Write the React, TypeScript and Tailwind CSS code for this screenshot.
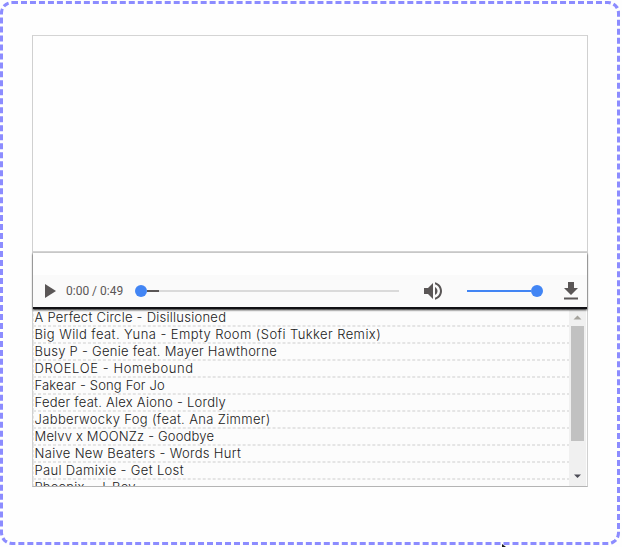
const tracks = [
  { title: 'A Perfect Circle - Disillusioned', spacing: 'tracking-[0.25px]' },
  { title: 'Big Wild feat. Yuna - Empty Room (Sofi Tukker Remix)', spacing: 'tracking-[0.42px]' },
  { title: 'Busy P - Genie feat. Mayer Hawthorne', spacing: 'tracking-[0.28px]' },
  { title: 'DROELOE - Homebound', spacing: 'tracking-[0.6px]' },
  { title: 'Fakear - Song For Jo', spacing: 'tracking-[0.17px]' },
  { title: 'Feder feat. Alex Aiono - Lordly', spacing: 'tracking-[0.25px]' },
  { title: 'Jabberwocky Fog (feat. Ana Zimmer)', spacing: 'tracking-[0.35px]' },
  { title: 'Melvv x MOONZz - Goodbye', spacing: 'tracking-[0.17px]' },
  { title: 'Naive New Beaters - Words Hurt', spacing: 'tracking-[0.32px]' },
  { title: 'Paul Damixie - Get Lost', spacing: 'tracking-[0.34px]' },
  { title: 'Phoenix - J-Boy', spacing: 'tracking-[0.2px]' },
];

function Player() {
  return (
    <div className="relative z-10 flex h-[56px] flex-col border-b-2 border-[#101014] bg-[#fefefe] shadow-[0_1px_2px_#222]">
      <div className="h-[22px] shrink-0" />
      <div className="flex h-8 items-center bg-[#fafafa] pl-3">
        <svg className="h-[14px] w-[11px] shrink-0" viewBox="0 0 11 14" fill="#5a5656"><path d="M0 0L11 7L0 14Z" /></svg>
        <span className="ml-[10px] w-[69px] shrink-0 font-[Roboto,sans-serif] text-[12px] leading-4 text-[#5a5656]">0:00 / 0:49</span>
        <div className="flex w-[264px] shrink-0 items-center">
          <div className="size-3 shrink-0 rounded-full bg-[#4285f4]" />
          <div className="h-[2px] w-3 bg-[#5a5656]" />
          <div className="h-[2px] flex-1 bg-[#dadada]" />
        </div>
        <svg className="ml-[25px] h-[18px] w-[18px] shrink-0" viewBox="3 3 18 18" fill="#5a5656">
          <path d="M3 9v6h4l5 5V4L7 9H3zm13.5 3c0-1.77-1.02-3.29-2.5-4.03v8.05c1.48-.73 2.5-2.25 2.5-4.02zM14 3.23v2.06c2.89.86 5 3.54 5 6.71s-2.11 5.85-5 6.71v2.06c4.01-.91 7-4.49 7-8.77s-2.99-7.86-7-8.77z" />
        </svg>
        <div className="ml-[25px] flex w-[76px] shrink-0 items-center">
          <div className="h-[2px] flex-1 bg-[#4285f4]" />
          <div className="size-3 rounded-full bg-[#4285f4]" />
        </div>
        <svg className="ml-[21px] h-[18px] w-[14px] shrink-0" viewBox="0 0 14 18" fill="#5a5656"><path d="M4 0h6v6h4l-7 7-7-7h4zM0 15.5h14v2H0z" /></svg>
      </div>
    </div>
  );
}

export default function App() {
  return (
    <div className="h-[547px] w-[622px] overflow-hidden bg-[#fefefe] pt-px">
      <div className="relative h-[544px] w-[620px] rounded-[12px] border-[3px] border-dashed border-[#8c8cff] px-[29px] pt-[31px]">
        <div className="h-[452px] w-[556px] border border-[#b4b4b4] border-t-[#d4d4d4] border-x-[#d0d0d0]">
          <div className="h-[217px] border-b-2 border-[#d4d4d4] bg-[#fefefe]" />
          <Player />
          <div className="flex h-[177px] overflow-hidden bg-[#fcfcfc]">
            <ul className="w-[537px] overflow-hidden">
              {tracks.map((track) => (
                <li key={track.title} className="h-[17px] border border-dashed border-[#e5e5e5] pl-[0.5px] font-[Inter,sans-serif] text-[13px] leading-[15px] font-light whitespace-nowrap text-[#202020]">
                  <span className={track.spacing}>{track.title}</span>
                </li>
              ))}
            </ul>
            <div className="-ml-px flex w-[17px] flex-col items-center bg-[#f0f0f0]">
              <svg className="h-[17px] w-[17px]" viewBox="0 0 17 17" fill="#a5a39d"><path d="M8.5 6.5L12.5 10.5H4.5Z" /></svg>
              <div className="h-[115px] w-[13px] bg-[#c1c1c1]" />
              <div className="flex-1" />
              <svg className="mb-px h-[17px] w-[17px]" viewBox="0 0 17 17" fill="#4b4b55"><path d="M5 6.5H12L8.5 10Z" /></svg>
            </div>
          </div>
        </div>
        <svg className="absolute top-[540px] left-[499px] h-[3px] w-[5px]" viewBox="0 0 5 3"><path d="M0 0L4 3H0Z" fill="#171717" /></svg>
      </div>
    </div>
  );
}
